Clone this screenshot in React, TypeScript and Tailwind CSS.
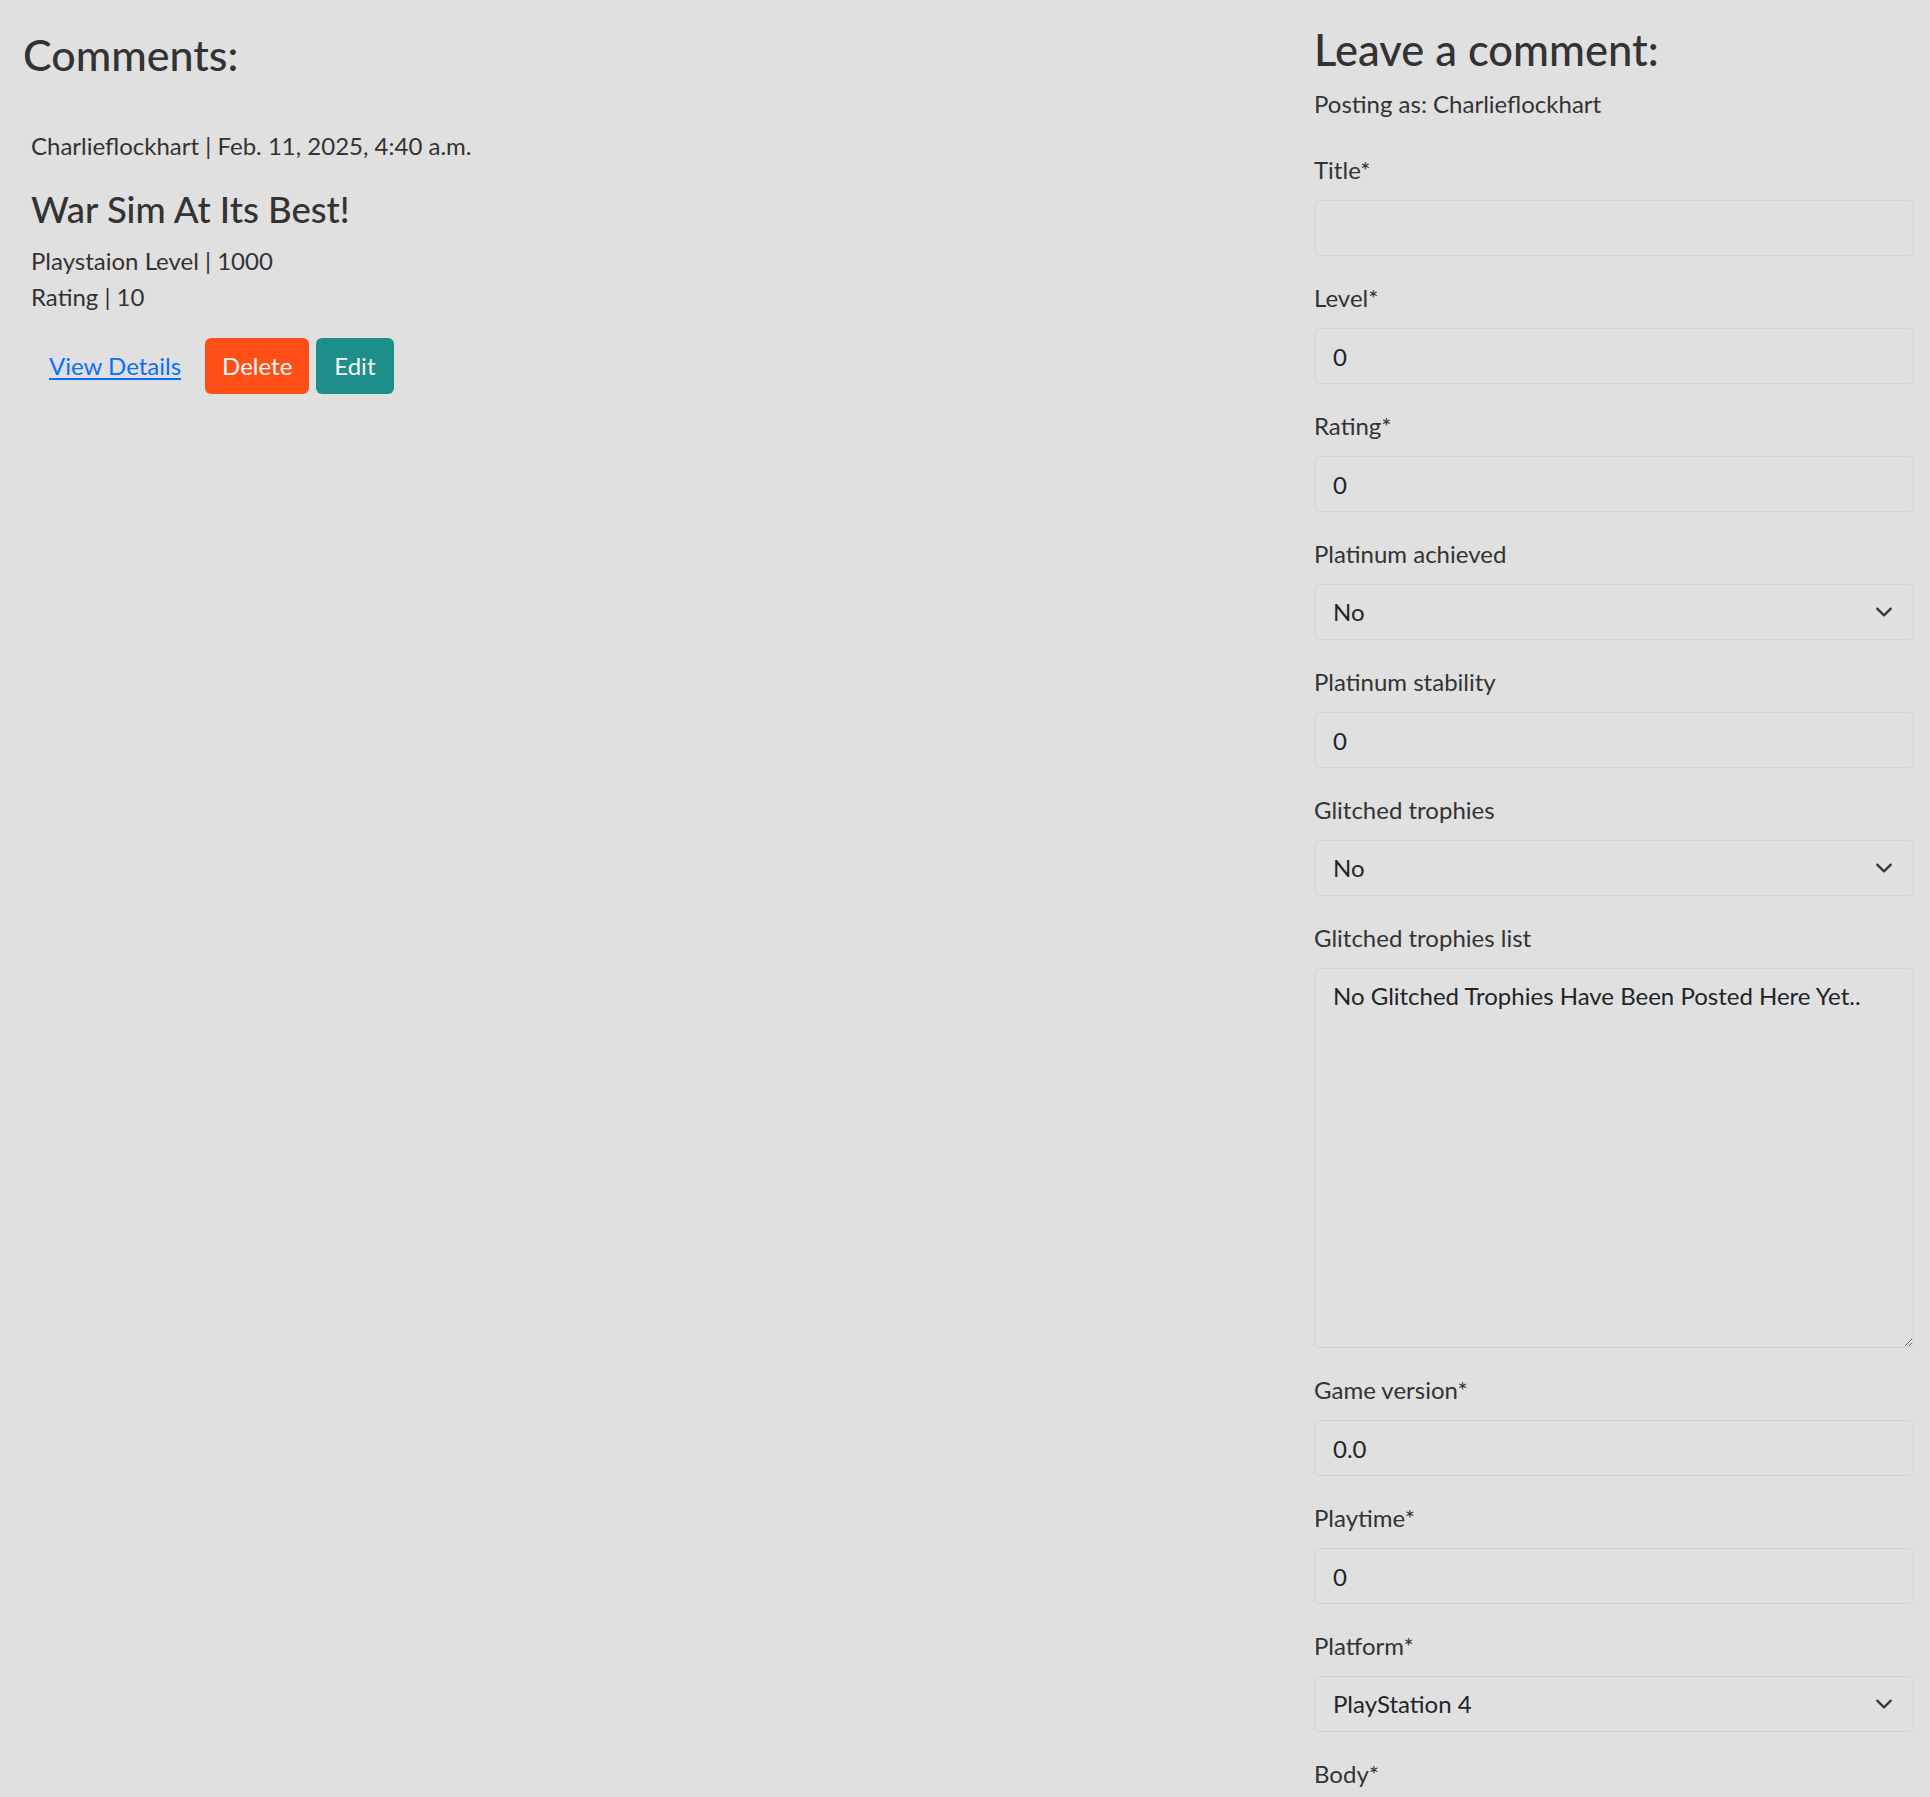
import React from 'react';

type Field = {
  label: string;
  kind: 'input' | 'select' | 'textarea';
  value: string;
};

const fields: Field[] = [
  { label: 'Title*', kind: 'input', value: '' },
  { label: 'Level*', kind: 'input', value: '0' },
  { label: 'Rating*', kind: 'input', value: '0' },
  { label: 'Platinum achieved', kind: 'select', value: 'No' },
  { label: 'Platinum stability', kind: 'input', value: '0' },
  { label: 'Glitched trophies', kind: 'select', value: 'No' },
  { label: 'Glitched trophies list', kind: 'textarea', value: 'No Glitched Trophies Have Been Posted Here Yet..' },
  { label: 'Game version*', kind: 'input', value: '0.0' },
  { label: 'Playtime*', kind: 'input', value: '0' },
  { label: 'Platform*', kind: 'select', value: 'PlayStation 4' },
  { label: 'Body*', kind: 'textarea', value: '' },
];

const controlClass =
  'block w-full px-[18px] py-[9px] border border-[#ced4da] rounded-[6px] bg-[#e0e0e0] text-[24px] leading-[36px] text-[#212529] outline-none';

function Chevron() {
  return (
    <svg
      className="pointer-events-none absolute right-[18px] top-1/2 -translate-y-1/2 w-[24px] h-[18px]"
      viewBox="0 0 16 16"
      fill="none"
    >
      <path d="m2 5 6 6 6-6" stroke="#343a40" strokeWidth="2" strokeLinecap="round" strokeLinejoin="round" />
    </svg>
  );
}

function FormField({ field }: { field: Field }) {
  return (
    <div className="mb-[24px]">
      <label className="block mb-[12px]">{field.label}</label>
      {field.kind === 'input' && (
        <input type="text" defaultValue={field.value} className={`${controlClass} h-[56px]`} />
      )}
      {field.kind === 'select' && (
        <div className="relative">
          <select defaultValue={field.value} className={`${controlClass} h-[56px] appearance-none`}>
            <option>{field.value}</option>
          </select>
          <Chevron />
        </div>
      )}
      {field.kind === 'textarea' && (
        <textarea defaultValue={field.value} className={`${controlClass} h-[380px] resize-y`} />
      )}
    </div>
  );
}

export default function App() {
  return (
    <div className="h-[1797px] overflow-hidden flex bg-[#e0e0e0] text-[#333333] font-['Lato',sans-serif] text-[24px] leading-[36px]">
      {/* Comments list */}
      <div className="w-[1287px] shrink-0 pl-[23px] pt-[30px]">
        <h3 className="text-[43px] leading-[50px] font-medium">Comments:</h3>

        <div className="pl-[8px] pt-[48px]">
          <p>Charlieflockhart | Feb. 11, 2025, 4:40 a.m.</p>
          <h4 className="mt-[24px] text-[36.5px] leading-[43px] font-medium">War Sim At Its Best!</h4>
          <p className="mt-[12px]">Playstaion Level | 1000</p>
          <p>Rating | 10</p>

          <div className="mt-[23px] flex items-center">
            <a href="#" className="px-[18px] py-[10px] text-[#0d6efd] underline underline-offset-[3px]">
              View Details
            </a>
            <button className="ml-[6px] h-[56px] px-[17px] rounded-[6px] bg-[#ff4f17] text-[#f8f8f8]">Delete</button>
            <button className="ml-[7px] h-[56px] px-[18px] rounded-[6px] bg-[#1e8e8a] text-[#f8f8f8]">Edit</button>
          </div>
        </div>
      </div>

      {/* Comment form */}
      <div className="flex-1 pl-[27px] pr-[16px] pt-[24px]">
        <h3 className="text-[43.5px] leading-[50px] font-medium">Leave a comment:</h3>
        <p className="mt-[12px]">Posting as: Charlieflockhart</p>
        <form className="mt-[30px]">
          {fields.map((f) => (
            <FormField key={f.label} field={f} />
          ))}
        </form>
      </div>
    </div>
  );
}
